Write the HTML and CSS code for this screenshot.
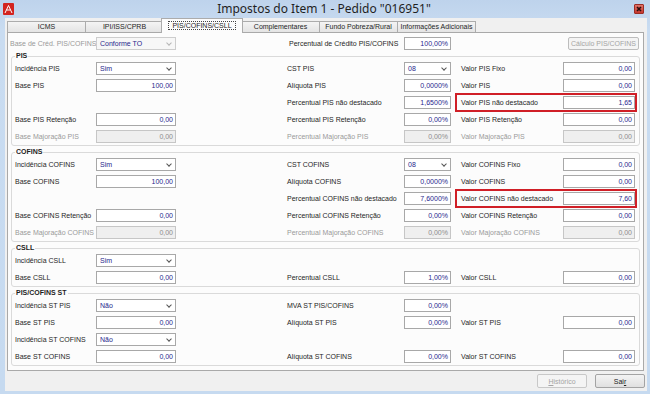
FILE: index.html
```html
<!DOCTYPE html>
<html lang="pt-BR">
<head>
    <meta charset="UTF-8">
    <title>Impostos do Item 1 - Pedido "016951"</title>
    <link rel="stylesheet" href="styles.css">
</head>
<body>

<div class="window">
    <!-- Title bar -->
    <div class="titlebar">
        <svg class="app-icon" width="11" height="12" viewBox="0 0 11 12">
            <rect width="11" height="12" rx="1" fill="#d3241f"/>
            <path d="M2 10 L5.5 2.5 L9 10 M3.6 7 H7.4" stroke="#fff" stroke-width="1" fill="none"/>
        </svg>
        <div class="title">Impostos do Item 1 - Pedido "016951"</div>
        <div class="close">
            <svg width="8" height="8" viewBox="0 0 8 8"><path d="M2 2 L6 6 M6 2 L2 6" stroke="#2a0d0d" stroke-width="1.6"/></svg>
        </div>
    </div>

    <div class="client">
        <!-- Tabs -->
        <ul class="tabs">
            <li>ICMS</li>
            <li>IPI/ISS/CPRB</li>
            <li class="active"><span>PIS/COFINS/CSLL</span></li>
            <li>Complementares</li>
            <li>Fundo Pobreza/Rural</li>
            <li>Informações Adicionais</li>
        </ul>

        <div class="tabpage">
            <div class="top-row">
                <label class="disabled">Base de Créd. PIS/COFINS</label>
                <div class="select readonly">Conforme TO</div>
                <span></span>
                <label>Percentual de Crédito PIS/COFINS</label>
                <div class="field">100,00%</div>
                <button class="calc" disabled>Cálculo PIS/COFINS</button>
            </div>

            <!-- PIS -->
            <fieldset class="group">
                <legend>PIS</legend>
                <div class="grid">
                    <div class="pair c1"><label>Incidência PIS</label><div class="select">Sim</div></div>
                    <div class="pair c2"><label>CST PIS</label><div class="select">08</div></div>
                    <div class="pair c3"><label>Valor PIS Fixo</label><div class="field">0,00</div></div>

                    <div class="pair c1"><label>Base PIS</label><div class="field">100,00</div></div>
                    <div class="pair c2"><label>Alíquota PIS</label><div class="field">0,0000%</div></div>
                    <div class="pair c3"><label>Valor PIS</label><div class="field">0,00</div></div>

                    <div class="pair c2"><label>Percentual PIS não destacado</label><div class="field">1,6500%</div></div>
                    <div class="pair c3 hl"><label>Valor PIS não destacado</label><div class="field">1,65</div></div>

                    <div class="pair c1"><label>Base PIS Retenção</label><div class="field">0,00</div></div>
                    <div class="pair c2"><label>Percentual PIS Retenção</label><div class="field">0,00%</div></div>
                    <div class="pair c3"><label>Valor PIS Retenção</label><div class="field">0,00</div></div>

                    <div class="pair c1 off"><label>Base Majoração PIS</label><div class="field">0,00</div></div>
                    <div class="pair c2 off"><label>Percentual Majoração PIS</label><div class="field">0,00%</div></div>
                    <div class="pair c3 off"><label>Valor Majoração PIS</label><div class="field">0,00</div></div>
                </div>
            </fieldset>

            <!-- COFINS -->
            <fieldset class="group">
                <legend>COFINS</legend>
                <div class="grid">
                    <div class="pair c1"><label>Incidência COFINS</label><div class="select">Sim</div></div>
                    <div class="pair c2"><label>CST COFINS</label><div class="select">08</div></div>
                    <div class="pair c3"><label>Valor COFINS Fixo</label><div class="field">0,00</div></div>

                    <div class="pair c1"><label>Base COFINS</label><div class="field">100,00</div></div>
                    <div class="pair c2"><label>Alíquota COFINS</label><div class="field">0,0000%</div></div>
                    <div class="pair c3"><label>Valor COFINS</label><div class="field">0,00</div></div>

                    <div class="pair c2"><label>Percentual COFINS não destacado</label><div class="field">7,6000%</div></div>
                    <div class="pair c3 hl"><label>Valor COFINS não destacado</label><div class="field">7,60</div></div>

                    <div class="pair c1"><label>Base COFINS Retenção</label><div class="field">0,00</div></div>
                    <div class="pair c2"><label>Percentual COFINS Retenção</label><div class="field">0,00%</div></div>
                    <div class="pair c3"><label>Valor COFINS Retenção</label><div class="field">0,00</div></div>

                    <div class="pair c1 off"><label>Base Majoração COFINS</label><div class="field">0,00</div></div>
                    <div class="pair c2 off"><label>Percentual Majoração COFINS</label><div class="field">0,00%</div></div>
                    <div class="pair c3 off"><label>Valor Majoração COFINS</label><div class="field">0,00</div></div>
                </div>
            </fieldset>

            <!-- CSLL -->
            <fieldset class="group">
                <legend>CSLL</legend>
                <div class="grid">
                    <div class="pair c1"><label>Incidência CSLL</label><div class="select">Sim</div></div>

                    <div class="pair c1"><label>Base CSLL</label><div class="field">0,00</div></div>
                    <div class="pair c2"><label>Percentual CSLL</label><div class="field">1,00%</div></div>
                    <div class="pair c3"><label>Valor CSLL</label><div class="field">0,00</div></div>
                </div>
            </fieldset>

            <!-- PIS/COFINS ST -->
            <fieldset class="group">
                <legend>PIS/COFINS ST</legend>
                <div class="grid">
                    <div class="pair c1"><label>Incidência ST PIS</label><div class="select">Não</div></div>
                    <div class="pair c2"><label>MVA ST PIS/COFINS</label><div class="field">0,00%</div></div>

                    <div class="pair c1"><label>Base ST PIS</label><div class="field">0,00</div></div>
                    <div class="pair c2"><label>Alíquota ST PIS</label><div class="field">0,00%</div></div>
                    <div class="pair c3"><label>Valor ST PIS</label><div class="field">0,00</div></div>

                    <div class="pair c1"><label>Incidência ST COFINS</label><div class="select">Não</div></div>

                    <div class="pair c1"><label>Base ST COFINS</label><div class="field">0,00</div></div>
                    <div class="pair c2"><label>Alíquota ST COFINS</label><div class="field">0,00%</div></div>
                    <div class="pair c3"><label>Valor ST COFINS</label><div class="field">0,00</div></div>
                </div>
            </fieldset>
        </div>

        <!-- Footer buttons -->
        <div class="footer">
            <button disabled><u>H</u>istórico</button>
            <button>Sai<u>r</u></button>
        </div>
    </div>
</div>

</body>
</html>
```

FILE: styles.css
```css
/* Reset */
* {
    box-sizing: border-box;
}

body {
    margin: 0;
    font-family: "Liberation Sans", Arial, sans-serif;
    font-size: 7px;
    color: #1e1e1e;
    background-color: #c4d8ef;
}

/* Window frame */
.window {
    width: 650px;
    height: 394px;
    overflow: hidden;
    background: linear-gradient(#bed3ec, #c9dcf1 30px, #c6daf0);
}

.titlebar {
    height: 18px;
    display: flex;
    align-items: center;
    padding: 0 6px 0 3px;
}

.app-icon {
    display: block;
}

.title {
    flex: 1;
    text-align: center;
    font-family: "Noto Sans", sans-serif;
    font-size: 12px;
    line-height: 18px;
    color: #1f1f1f;
}

.close {
    width: 10px;
    height: 10px;
    background: linear-gradient(#e0746a, #c5372e);
    border: 1px solid #9c2b24;
    border-radius: 1px;
    display: flex;
    align-items: center;
    justify-content: center;
}

.close svg {
    display: block;
}

/* Client area */
.client {
    margin: 0 3px 0 5px;
    height: 373px;
    background-color: #f0f0f0;
    display: flex;
    flex-direction: column;
}

/* Tabs */
.tabs {
    list-style: none;
    margin: 0;
    padding: 0 0 0 2px;
    height: 14px;
    display: flex;
    align-items: flex-end;
}

.tabs li {
    width: 79px;
    height: 11px;
    margin-right: -1px;
    border: 1px solid #acacac;
    border-bottom: none;
    background: linear-gradient(#f4f4f4, #e4e4e4);
    text-align: center;
    line-height: 10px;
    white-space: nowrap;
    color: #1e1e1e;
}

.tabs li.active {
    height: 15px;
    margin: 0 -2px -1px -2px;
    width: 82px;
    padding-top: 2px;
    background: #fcfcfc;
    position: relative;
    z-index: 1;
}

.tabs li.active span {
    border: 1px dotted #444;
    padding: 0 3px;
}

.tabpage {
    height: 339px;
    margin: 0 3px 0 2px;
    border: 1px solid #a9a9a9;
    background-color: #fcfcfc;
    padding: 4px 3px 0 3px;
}

/* First row, outside the groups */
.top-row {
    display: grid;
    grid-template-columns: 86px 80px 113px 115px 47px 1fr;
    height: 13px;
    align-items: center;
    margin-left: -1px;
}

.top-row label,
.pair label {
    white-space: nowrap;
}

.disabled,
.off label {
    color: #9a9a9a;
}

.calc {
    justify-self: end;
    width: 71px;
    height: 13px;
    margin-right: 1px;
}

/* Group boxes */
.group {
    margin: 1px 0 0 0;
    padding: 1px 0 2px 3px;
    border: 1px solid #dadada;
    border-radius: 3px;
    min-width: 0;
}

.group legend {
    padding: 0 1px;
    font-weight: bold;
    line-height: 10px;
    color: #1e1e1e;
}

.grid {
    display: grid;
    grid-template-columns: 161px 111px 164px 10px 174px;
    grid-auto-rows: 13px;
    row-gap: 4px;
}

.pair {
    display: grid;
    align-items: center;
}

.c1 {
    grid-column: 1;
    grid-template-columns: 81px 1fr;
}

.c2 {
    grid-column: 3;
    grid-template-columns: 117px 1fr;
}

.c3 {
    grid-column: 5;
    grid-template-columns: 102px 1fr;
}

/* Highlighted (red) rows */
.pair.hl {
    border: 2px solid #d01f27;
    margin: -3px -2px -3px -6px;
    padding: 1px 0 1px 4px;
}

/* Inputs */
.field,
.select {
    height: 13px;
    border: 1px solid #a8a8a8;
    background-color: #fff;
    color: #27278c;
    line-height: 11px;
    white-space: nowrap;
}

.field {
    text-align: right;
    padding: 0 2px;
}

.select {
    display: flex;
    justify-content: space-between;
    align-items: center;
    padding: 0 3px 0 3px;
}

.select::after {
    content: "";
    width: 3px;
    height: 3px;
    margin: 0 1px 2px 0;
    border-right: 1px solid #555;
    border-bottom: 1px solid #555;
    transform: rotate(45deg);
}

.select.readonly {
    background-color: #f7f7f7;
    border-color: #cdcdcd;
}

.select.readonly::after {
    border-color: #b5b5b5;
}

.off .field {
    background-color: #efefef;
    border-color: #c6c6c6;
    color: #8c8c8c;
}

/* Footer */
.footer {
    flex: 1;
    display: flex;
    justify-content: flex-end;
    gap: 8px;
    padding: 3px 2px 0 0;
}

button {
    font-family: "Liberation Sans", Arial, sans-serif;
    font-size: 7px;
    color: #222;
    width: 50px;
    height: 14px;
    padding: 0;
    border: 1px solid #a3a3a3;
    border-radius: 2px;
    background: linear-gradient(#f3f3f3, #e0e0e0);
}

button:disabled {
    color: #a4a4a4;
    border-color: #c8c8c8;
    background: #f4f4f4;
}

.calc:disabled {
    border-color: #bdbdbd;
}
```
